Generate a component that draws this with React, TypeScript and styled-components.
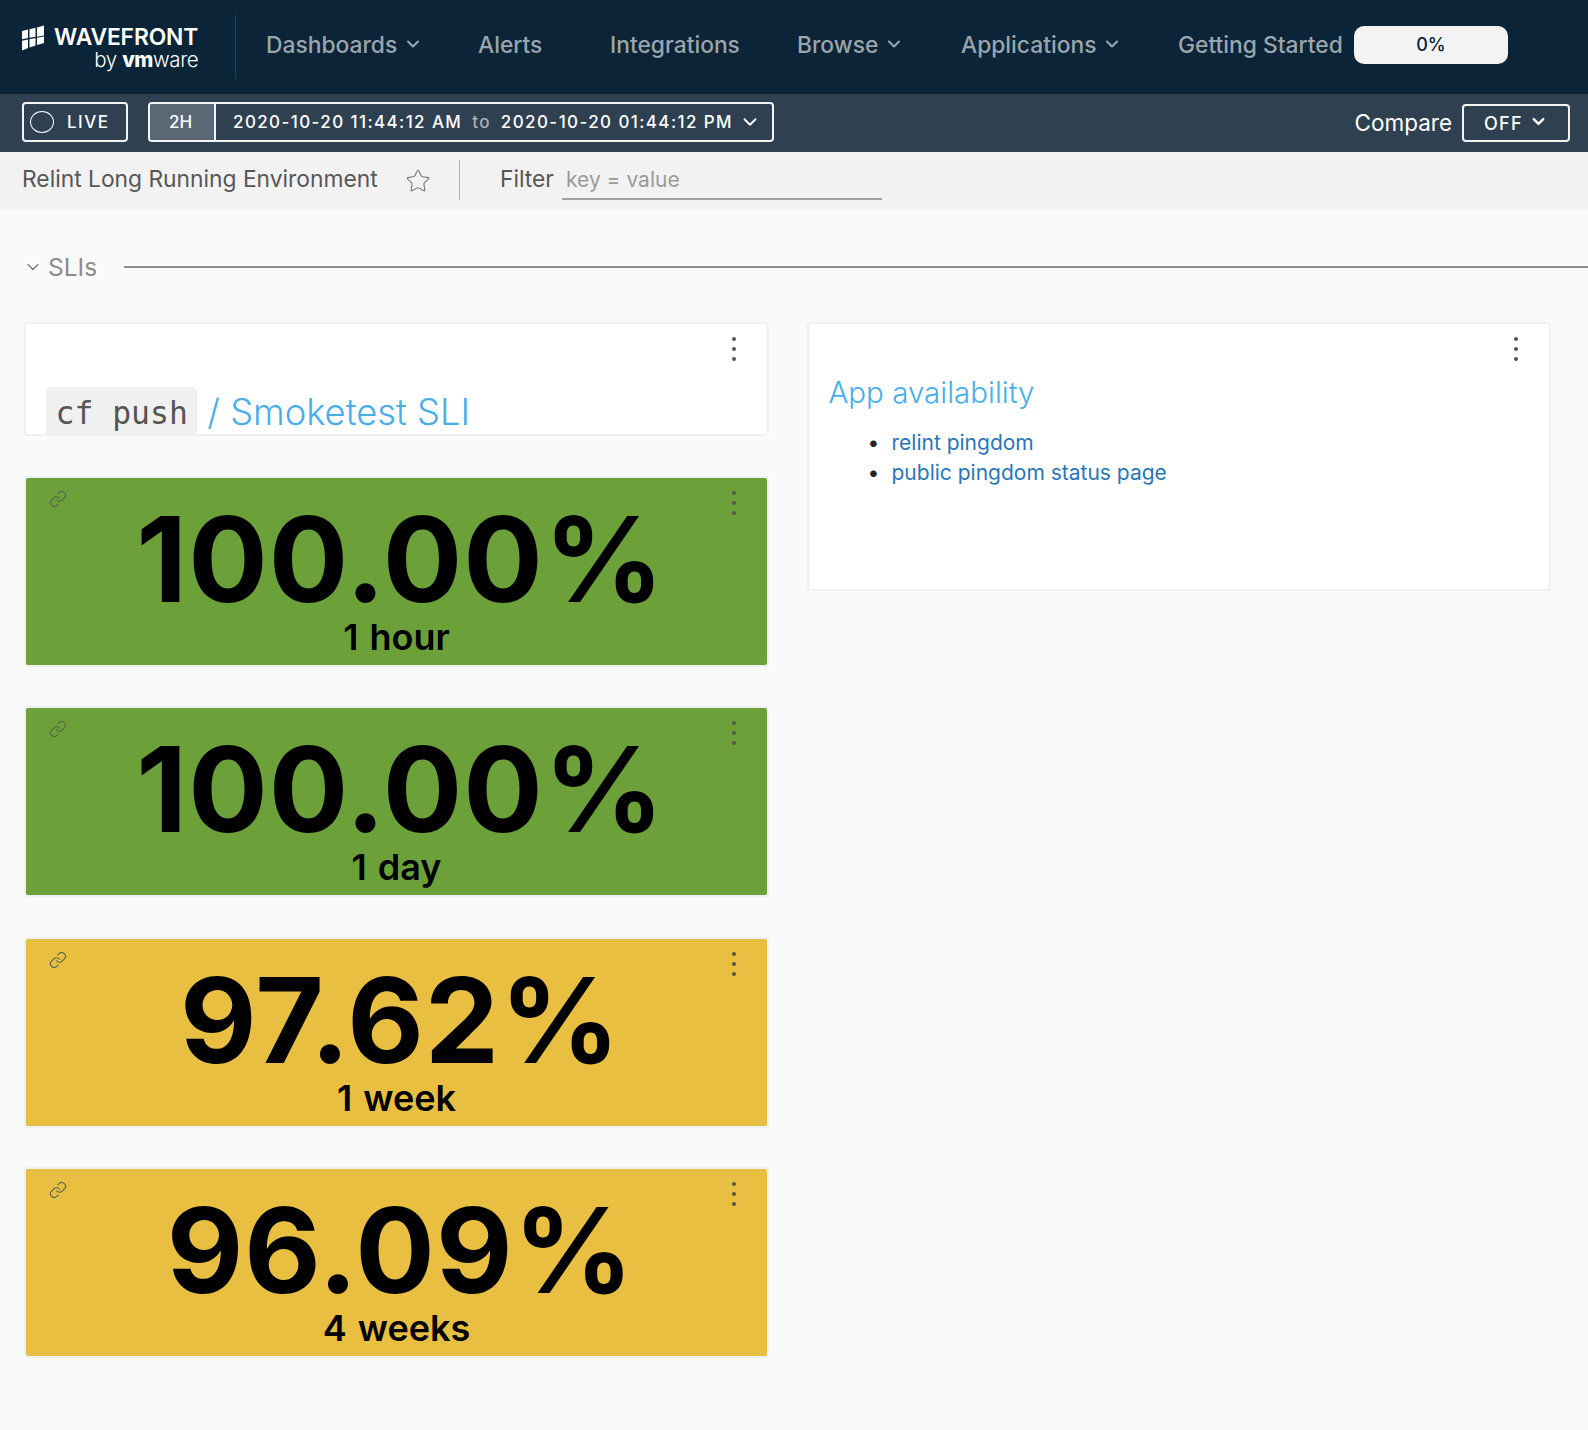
import styled, { createGlobalStyle } from "styled-components";
import { ChevronDown, Link as LinkIcon, Star } from "lucide-react";

const GlobalStyle = createGlobalStyle`
  html, body {
    margin: 0;
    padding: 0;
    background: #fafafa;
    font-family: Inter, "Open Sans", "Liberation Sans", sans-serif;
  }
  * { box-sizing: border-box; }
`;

const stats = [
  { value: "100.00%", label: "1 hour", color: "#6ca13a" },
  { value: "100.00%", label: "1 day", color: "#6ca13a" },
  { value: "97.62%", label: "1 week", color: "#e8bf41" },
  { value: "96.09%", label: "4 weeks", color: "#e8bf41" },
];

function Kebab() {
  return (
    <KebabButton>
      <i />
      <i />
      <i />
    </KebabButton>
  );
}

function App() {
  return (
    <Page>
      <GlobalStyle />
      <TopNav>
        <Logo>
          <svg width="23" height="26" viewBox="0 0 23 26">
            <g fill="#fff">
              <path d="M0 6l6-1.500v8.500l-6 1.200zM7.500 4.200l6-1.500v9l-6 1.100zM15 2.400L22 .5v10l-7 1.200z" />
              <path d="M0 15.700l6-1.200v8.500l-6 2.500zM7.500 14.200l6-1.100v7.500l-6 2zM15 12.800l7-1.200v6.500l-7 2z" />
            </g>
          </svg>
          <LogoText>
            <LogoName>WAVEFRONT</LogoName>
            <LogoBy>
              by <b>vm</b>ware
            </LogoBy>
          </LogoText>
        </Logo>
        <NavDivider />
        <NavItem $width={212}>
          Dashboards <ChevronDown size={20} strokeWidth={2.5} />
        </NavItem>
        <NavItem $width={132}>Alerts</NavItem>
        <NavItem $width={187}>Integrations</NavItem>
        <NavItem $width={164}>
          Browse <ChevronDown size={20} strokeWidth={2.5} />
        </NavItem>
        <NavItem $width={217}>
          Applications <ChevronDown size={20} strokeWidth={2.5} />
        </NavItem>
        <NavItem $width={177}>Getting Started</NavItem>
        <Progress>0%</Progress>
      </TopNav>

      <TimeBar>
        <LiveButton>
          <LiveDot />
          LIVE
        </LiveButton>
        <RangeBox>
          <RangeTag>2H</RangeTag>
          <RangeText>
            2020-10-20 11:44:12 AM <RangeTo>to</RangeTo> 2020-10-20 01:44:12 PM
          </RangeText>
          <RangeChevron>
            <ChevronDown size={22} strokeWidth={2} />
          </RangeChevron>
        </RangeBox>
        <CompareLabel>Compare</CompareLabel>
        <CompareButton>
          OFF
          <CompareChevron>
            <ChevronDown size={19} strokeWidth={3} />
          </CompareChevron>
        </CompareButton>
      </TimeBar>

      <FilterBar>
        <EnvName>Relint Long Running Environment</EnvName>
        <StarIcon>
          <Star size={26} strokeWidth={1} />
        </StarIcon>
        <FilterDivider />
        <FilterLabel>Filter</FilterLabel>
        <FilterInput>key = value</FilterInput>
      </FilterBar>

      <SectionHeader>
        <ChevronDown size={20} strokeWidth={1.5} color="#777" />
        <SectionName>SLIs</SectionName>
        <SectionLine />
      </SectionHeader>

      <Columns>
        <Column>
          <TitleCard>
            <Kebab />
            <Code>cf push</Code>
            <SlashTitle>/ Smoketest SLI</SlashTitle>
          </TitleCard>
          {stats.map((s, i) => (
            <StatCard key={i} $color={s.color}>
              <ChainIcon>
                <LinkIcon size={18} strokeWidth={1.5} />
              </ChainIcon>
              <Kebab />
              <StatValue>{s.value}</StatValue>
              <StatLabel>{s.label}</StatLabel>
            </StatCard>
          ))}
        </Column>
        <Column>
          <TextCard>
            <Kebab />
            <CardHeading>App availability</CardHeading>
            <LinkList>
              <li>relint pingdom</li>
              <li>public pingdom status page</li>
            </LinkList>
          </TextCard>
        </Column>
      </Columns>
    </Page>
  );
}

export default App;

const Page = styled.div`
  width: 1588px;
  height: 1430px;
  overflow: hidden;
  background: #fafafa;
`;

const TopNav = styled.div`
  display: flex;
  align-items: center;
  height: 94px;
  background: #0c2438;
  padding-left: 22px;
`;

const Logo = styled.div`
  display: flex;
  align-items: flex-start;
  gap: 9px;
  width: 213px;
`;

const LogoText = styled.div`
  display: flex;
  flex-direction: column;
  align-items: flex-end;
  color: #fff;
`;

const LogoName = styled.div`
  font-size: 22.8px;
  font-weight: 600;
  line-height: 24px;
  letter-spacing: -0.1px;
`;

const LogoBy = styled.div`
  font-size: 20.5px;
  font-weight: 300;
  line-height: 21px;
  letter-spacing: -0.4px;

  b {
    font-weight: 800;
  }
`;

const NavDivider = styled.div`
  width: 1px;
  height: 64px;
  background: #1d4560;
  margin-right: 30px;
`;

const NavItem = styled.div<{ $width: number }>`
  display: flex;
  align-items: center;
  gap: 6px;
  width: ${(p) => p.$width}px;
  flex: none;
  margin-bottom: 6px;
  color: #9aa5ad;
  font-size: 22.8px;
  font-weight: 500;
  white-space: nowrap;
`;

const Progress = styled.div`
  width: 154px;
  height: 38px;
  flex: none;
  margin-left: -1px;
  margin-bottom: 4px;
  padding-bottom: 2px;
  display: flex;
  align-items: center;
  justify-content: center;
  border-radius: 10px;
  background: #f3f3f3;
  color: #0c2438;
  font-size: 18px;
  font-weight: 500;
`;

const TimeBar = styled.div`
  display: flex;
  align-items: center;
  height: 58px;
  background: #2f4050;
  padding: 0 18px 2px 22px;
  color: #fff;
`;

const LiveButton = styled.div`
  display: flex;
  align-items: center;
  gap: 13px;
  width: 106px;
  height: 40px;
  padding-left: 6px;
  border: 2px solid #f4f4f4;
  border-radius: 4px;
  font-size: 17px;
  font-weight: 500;
  letter-spacing: 1.5px;
`;

const LiveDot = styled.span`
  width: 24px;
  height: 22px;
  border: 1.5px solid #fff;
  border-radius: 50%;
`;

const RangeBox = styled.div`
  display: flex;
  align-items: center;
  width: 626px;
  height: 40px;
  margin-left: 20px;
  border: 2px solid #f4f4f4;
  border-radius: 4px;
  overflow: hidden;
`;

const RangeTag = styled.div`
  display: flex;
  align-items: center;
  justify-content: center;
  flex: none;
  width: 66px;
  height: 100%;
  padding-right: 3px;
  background: #5a6875;
  border-right: 2px solid #f4f4f4;
  font-size: 17px;
  font-weight: 500;
`;

const RangeText = styled.div`
  flex: 1;
  padding-left: 17px;
  font-size: 17px;
  font-weight: 500;
  letter-spacing: 1.4px;
  white-space: nowrap;
`;

const RangeTo = styled.span`
  color: #a9b2b9;
  margin: 0 4px;
`;

const RangeChevron = styled.div`
  display: flex;
  flex: none;
  margin-right: 11px;
`;

const CompareLabel = styled.div`
  margin-left: auto;
  margin-right: 10px;
  font-size: 22.5px;
  font-weight: 400;
`;

const CompareButton = styled.div`
  display: flex;
  align-items: center;
  gap: 6px;
  width: 108px;
  height: 38px;
  margin-top: 2px;
  padding-left: 20px;
  border: 2px solid #f4f4f4;
  border-radius: 4px;
  font-size: 18px;
  font-weight: 500;
  letter-spacing: 1.3px;
`;

const CompareChevron = styled.div`
  display: flex;
  margin-bottom: 3px;
`;

const FilterBar = styled.div`
  display: flex;
  align-items: center;
  height: 58px;
  background: #f2f2f2;
  padding: 0 0 6px 22px;
`;

const EnvName = styled.div`
  width: 383px;
  color: #565656;
  font-size: 22.8px;
  font-weight: 400;
  white-space: nowrap;
`;

const StarIcon = styled.div`
  display: flex;
  width: 54px;
  color: #777;
  padding-top: 6px;
`;

const FilterDivider = styled.div`
  width: 1px;
  height: 40px;
  background: #b4b4b4;
  margin-right: 40px;
  margin-top: 4px;
`;

const FilterLabel = styled.div`
  color: #565656;
  font-size: 22.8px;
  width: 62px;
`;

const FilterInput = styled.div`
  width: 320px;
  height: 37px;
  margin-top: 6px;
  padding: 0 4px;
  border-bottom: 2px solid #a0a0a0;
  color: #9a9a9a;
  font-size: 21px;
  line-height: 33px;
`;

const SectionHeader = styled.div`
  display: flex;
  align-items: center;
  height: 36px;
  margin-top: 39px;
  padding-left: 23px;
`;

const SectionName = styled.div`
  margin-left: 5px;
  width: 76px;
  color: #8c8c8c;
  font-size: 24.5px;
  font-weight: 400;
`;

const SectionLine = styled.div`
  flex: 1;
  height: 2px;
  background: #8f8f8f;
`;

const Columns = styled.div`
  display: grid;
  grid-template-columns: 745px 744px;
  column-gap: 37.5px;
  margin-top: 37px;
  padding-left: 24px;
`;

const Column = styled.div`
  display: flex;
  flex-direction: column;
  gap: 39.5px;
`;

const KebabButton = styled.div`
  position: absolute;
  top: 13px;
  right: 31px;
  display: flex;
  flex-direction: column;
  gap: 6px;

  i {
    width: 4px;
    height: 4px;
    border-radius: 50%;
    background: #555;
  }
`;

const Card = styled.div`
  position: relative;
  border: 2px solid #eff0f4;
  border-radius: 4px;
  background: #fff;
  overflow: hidden;
`;

const TitleCard = styled(Card)`
  display: flex;
  align-items: flex-end;
  gap: 10px;
  height: 114px;
  padding-left: 20px;
`;

const Code = styled.code`
  display: block;
  height: 47px;
  padding: 4px 9.5px 0;
  background: #f0f0f0;
  border-radius: 5px 5px 0 0;
  color: #555;
  font-family: "DejaVu Sans Mono", "Liberation Mono", monospace;
  font-size: 31.4px;
  line-height: 44px;
  white-space: pre;
`;

const SlashTitle = styled.div`
  color: #47aeea;
  font-size: 36.3px;
  font-weight: 300;
  line-height: 44px;
  height: 44px;
  white-space: nowrap;
`;

const StatCard = styled(Card)<{ $color: string }>`
  display: flex;
  flex-direction: column;
  align-items: center;
  height: 191px;
  background: ${(p) => p.$color};
  color: #000;
`;

const ChainIcon = styled.div`
  position: absolute;
  top: 12px;
  left: 23px;
  color: #5b6153;
  display: flex;
`;

const StatValue = styled.div`
  margin-top: 22px;
  padding-left: 8px;
  font-size: 118px;
  font-weight: 700;
  line-height: 118px;
  letter-spacing: 1px;
`;

const StatLabel = styled.div`
  margin-top: 2px;
  font-size: 36px;
  font-weight: 600;
  line-height: 34px;
  word-spacing: 2px;
`;

const TextCard = styled(Card)`
  height: 269px;
  padding: 50px 20px 0;
`;

const CardHeading = styled.div`
  color: #47aeea;
  font-size: 29.5px;
  font-weight: 300;
  line-height: 36px;
`;

const LinkList = styled.ul`
  margin: 18px 0 0;
  padding-left: 63px;
  list-style: none;
  font-size: 21px;
  line-height: 30px;

  li {
    color: #2a76b8;
  }

  li::before {
    content: "•";
    display: inline-block;
    width: 24px;
    margin-left: -24px;
    color: #222;
  }
`;
